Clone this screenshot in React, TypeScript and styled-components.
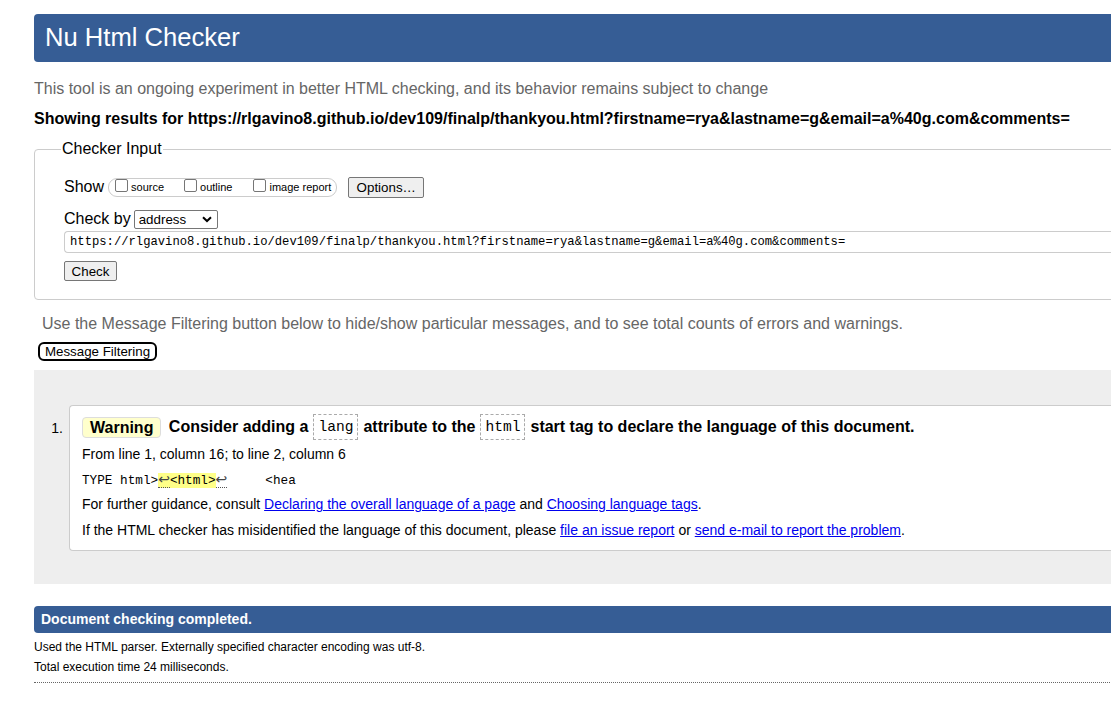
import styled, { createGlobalStyle } from "styled-components";

const GlobalStyle = createGlobalStyle`
  html, body {
    margin: 0;
    padding: 0;
    background: #fff;
    overflow: hidden;
  }
  body {
    font-family: "Liberation Sans", Arial, sans-serif;
    color: #000;
  }
`;

const mono = `"Liberation Mono", "DejaVu Sans Mono", monospace`;

// Whole page column, runs past the right edge like the original
const Page = styled.div`
  padding: 14px 0 0 34px;
  width: 1120px;
`;

const Title = styled.h1`
  margin: 0;
  height: 48px;
  line-height: 47px;
  padding: 0 11px;
  background: #365d95;
  color: #fff;
  font-size: 25.6px;
  font-weight: normal;
  border-radius: 4px 0 0 4px;
`;

const Intro = styled.p`
  margin: 18px 0 0;
  font-size: 16px;
  line-height: 18px;
  color: #666;
`;

const Showing = styled.p`
  margin: 12px 0 0;
  font-size: 16px;
  line-height: 18px;
  font-weight: bold;
`;

const Fieldset = styled.fieldset`
  margin: 12px 0 0;
  padding: 0 0 18px 29px;
  border: 1px solid #ccc;
  border-radius: 4px;
  min-width: 0;
`;

const Legend = styled.legend`
  padding: 0 1px;
  margin-left: -3px;
  font-size: 16px;
  line-height: 18px;
`;

const Row = styled.div<{ $h: number; $mt: number }>`
  display: flex;
  align-items: center;
  height: ${(p) => p.$h}px;
  margin-top: ${(p) => p.$mt}px;
  font-size: 16px;
`;

const Label = styled.span`
  margin-right: 3px;
`;

const CheckGroup = styled.span`
  display: inline-flex;
  align-items: center;
  height: 17px;
  padding: 0 5px 0 6px;
  border: 1px solid #ccc;
  border-radius: 9px;
  margin-left: 1px;
`;

const CheckItem = styled.label<{ $gap: number }>`
  display: inline-flex;
  align-items: center;
  font-size: 11px;
  margin-right: ${(p) => p.$gap}px;
`;

const Box = styled.span`
  display: inline-block;
  width: 11px;
  height: 11px;
  border: 1px solid #767676;
  border-radius: 2px;
  background: #fff;
  margin-right: 3px;
  position: relative;
  top: -2px;
`;

const Btn = styled.button<{ $w: number; $h: number }>`
  width: ${(p) => p.$w}px;
  height: ${(p) => p.$h}px;
  padding: 0;
  font-family: "Liberation Sans", Arial, sans-serif;
  font-size: 13.33px;
  color: #000;
  background: #efefef;
  border: 1px solid #767676;
  border-radius: 2px;
`;

const OptionsBtn = styled(Btn)`
  margin-left: 11px;
`;

const Select = styled.span`
  display: inline-flex;
  align-items: center;
  justify-content: space-between;
  box-sizing: border-box;
  width: 84px;
  height: 19px;
  margin-left: 3px;
  padding: 0 5px 0 4px;
  border: 1px solid #767676;
  border-radius: 2px;
  font-size: 13.33px;
`;

const UrlInput = styled.div`
  box-sizing: border-box;
  height: 22px;
  margin-top: 2px;
  padding: 0 5px;
  border: 1px solid #ccc;
  border-right: none;
  border-radius: 4px 0 0 4px;
  font-family: ${mono};
  font-size: 12.2px;
  line-height: 20px;
  white-space: nowrap;
`;

const CheckBtn = styled(Btn)`
  display: block;
  margin-top: 8px;
`;

const FilterNote = styled.p`
  margin: 15px 0 0;
  padding-left: 8px;
  font-size: 16px;
  line-height: 18px;
  color: #666;
`;

const FilterBtn = styled.button`
  display: block;
  margin: 9px 0 0 4px;
  width: 119px;
  height: 19px;
  padding: 0;
  background: #fff;
  border: 2px solid #000;
  border-radius: 6px;
  font-family: "Liberation Sans", Arial, sans-serif;
  font-size: 13.33px;
  line-height: 14px;
  color: #000;
`;

const Panel = styled.div`
  margin-top: 9px;
  padding: 35px 0 33px;
  background: #eee;
`;

const Item = styled.div`
  display: grid;
  grid-template-columns: 35px 1fr;
`;

const ItemNum = styled.div`
  padding: 14px 6px 0 0;
  text-align: right;
  font-size: 14px;
  line-height: 18px;
`;

const Card = styled.div`
  background: #fff;
  border: 1px solid #ccc;
  border-right: none;
  border-radius: 4px 0 0 4px;
  padding: 8px 0 11px 12px;
`;

const MsgTitle = styled.div`
  display: flex;
  align-items: center;
  height: 26px;
  font-size: 16px;
  font-weight: bold;
  white-space: pre;
`;

const Badge = styled.span`
  display: inline-block;
  height: 19px;
  line-height: 19px;
  padding: 0 7px;
  background: #ffc;
  border: 1px solid #ddd;
  border-radius: 4px;
  margin-right: 3px;
`;

const CodeBox = styled.code`
  display: inline-block;
  box-sizing: border-box;
  height: 26px;
  line-height: 24px;
  padding: 0 4px;
  margin: 0 5px;
  border: 1px dashed #aaa;
  font-family: ${mono};
  font-size: 14.6px;
  font-weight: normal;
`;

const Line = styled.p<{ $mt: number }>`
  margin: ${(p) => p.$mt}px 0 0;
  font-size: 14px;
  line-height: 18px;
`;

const Extract = styled.p`
  margin: 8px 0 0;
  height: 18px;
  font-family: ${mono};
  font-size: 12.7px;
  line-height: 19px;
  white-space: pre;
`;

const Mark = styled.mark`
  background: #ff8;
  color: inherit;
`;

const Ret = styled.b`
  font-family: "DejaVu Sans", sans-serif;
  font-size: 14px;
  line-height: 1;
  font-weight: normal;
  color: #444;
  border-bottom: 1px dotted #555;
`;

const Link = styled.a`
  color: #0000ee;
  text-decoration: underline;
`;

const DoneBar = styled.div`
  margin-top: 22px;
  height: 27px;
  line-height: 27px;
  padding-left: 7px;
  background: #365d95;
  border-radius: 4px 0 0 4px;
  color: #fff;
  font-size: 14px;
  font-weight: bold;
`;

const Detail = styled.p<{ $mt: number }>`
  margin: ${(p) => p.$mt}px 0 0;
  font-size: 12px;
  line-height: 16px;
`;

const Rule = styled.div`
  margin-top: 7px;
  border-top: 1px dotted #666;
`;

const url =
  "https://rlgavino8.github.io/dev109/finalp/thankyou.html?firstname=rya&lastname=g&email=a%40g.com&comments=";

export default function App() {
  return (
    <Page>
      <GlobalStyle />
      <Title>Nu Html Checker</Title>
      <Intro>
        This tool is an ongoing experiment in better HTML checking, and its behavior remains subject to change
      </Intro>
      <Showing>Showing results for {url}</Showing>

      <Fieldset>
        <Legend>Checker Input</Legend>
        <Row $h={22} $mt={18}>
          <Label>Show</Label>
          <CheckGroup>
            <CheckItem $gap={20}>
              <Box />
              source
            </CheckItem>
            <CheckItem $gap={21}>
              <Box />
              outline
            </CheckItem>
            <CheckItem $gap={0}>
              <Box />
              image report
            </CheckItem>
          </CheckGroup>
          <OptionsBtn $w={76} $h={21}>Options…</OptionsBtn>
        </Row>
        <Row $h={20} $mt={11}>
          <span>Check by</span>
          <Select>
            address
            <svg width="10" height="7" viewBox="0 0 10 7">
              <path d="M1 1.2 L5 5 L9 1.2" fill="none" stroke="#000" strokeWidth="2" />
            </svg>
          </Select>
        </Row>
        <UrlInput>{url}</UrlInput>
        <CheckBtn $w={53} $h={20}>Check</CheckBtn>
      </Fieldset>

      <FilterNote>
        Use the Message Filtering button below to hide/show particular messages, and to see total counts of errors and warnings.
      </FilterNote>
      <FilterBtn>Message Filtering</FilterBtn>

      <Panel>
        <Item>
          <ItemNum>1.</ItemNum>
          <Card>
            <MsgTitle>
              <Badge>Warning</Badge>
              {" Consider adding a"}
              <CodeBox>lang</CodeBox>
              {"attribute to the"}
              <CodeBox>html</CodeBox>
              {"start tag to declare the language of this document."}
            </MsgTitle>
            <Line $mt={5}>From line 1, column 16; to line 2, column 6</Line>
            <Extract>
              TYPE html&gt;
              <Mark>
                <Ret>↩</Ret>&lt;html&gt;
              </Mark>
              <Ret>↩</Ret>
              {"     <hea"}
            </Extract>
            <Line $mt={6}>
              For further guidance, consult <Link href="#">Declaring the overall language of a page</Link> and{" "}
              <Link href="#">Choosing language tags</Link>.
            </Line>
            <Line $mt={8}>
              If the HTML checker has misidentified the language of this document, please{" "}
              <Link href="#">file an issue report</Link> or <Link href="#">send e-mail to report the problem</Link>.
            </Line>
          </Card>
        </Item>
      </Panel>

      <DoneBar>Document checking completed.</DoneBar>
      <Detail $mt={6}>Used the HTML parser. Externally specified character encoding was utf-8.</Detail>
      <Detail $mt={4}>Total execution time 24 milliseconds.</Detail>
      <Rule />
    </Page>
  );
}
